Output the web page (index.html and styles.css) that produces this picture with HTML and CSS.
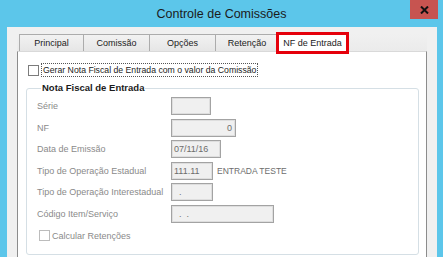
FILE: index.html
```html
<!DOCTYPE html>
<html lang="pt">
<head>
    <meta charset="UTF-8">
    <title>Controle de Comissões</title>
    <link rel="stylesheet" href="styles.css">
</head>
<body>
    <div class="window">
        <div class="titlebar">
            <span></span>
            <div class="title">Controle de Comissões</div>
            <div class="close">
                <svg width="9" height="8" viewBox="0 0 9 8">
                    <path d="M1 0.5 L8 7.5 M8 0.5 L1 7.5" stroke="#111" stroke-width="2" fill="none"/>
                </svg>
            </div>
        </div>
        <div class="client">
            <div class="tabs">
                <div class="tab w-principal">Principal</div>
                <div class="tab w-comissao">Comissão</div>
                <div class="tab w-opcoes">Opções</div>
                <div class="tab w-retencao">Retenção</div>
                <div class="tab active">NF de Entrada</div>
            </div>
            <div class="page">
                <div class="check top-check">
                    <span class="box"></span>
                    <span class="focus">Gerar Nota Fiscal de Entrada com o valor da Comissão</span>
                </div>
                <fieldset class="group">
                    <legend>Nota Fiscal de Entrada</legend>
                    <div class="fields">
                        <span class="lbl">Série</span>
                        <div class="field"><span class="inp w-serie"></span></div>

                        <span class="lbl">NF</span>
                        <div class="field"><span class="inp w-nf right">0</span></div>

                        <span class="lbl">Data de Emissão</span>
                        <div class="field"><span class="inp w-data">07/11/16</span></div>

                        <span class="lbl">Tipo de Operação Estadual</span>
                        <div class="field">
                            <span class="inp w-tipo">111.11</span>
                            <span class="desc">ENTRADA TESTE</span>
                        </div>

                        <span class="lbl">Tipo de Operação Interestadual</span>
                        <div class="field"><span class="inp w-tipo dot">.</span></div>

                        <span class="lbl">Código Item/Serviço</span>
                        <div class="field"><span class="inp w-codigo dot">. &nbsp;.</span></div>
                    </div>
                    <div class="check disabled">
                        <span class="box"></span>
                        <span>Calcular Retenções</span>
                    </div>
                </fieldset>
            </div>
        </div>
    </div>
</body>
</html>
```

FILE: styles.css
```css
body {
    margin: 0;
    width: 443px;
    height: 257px;
    overflow: hidden;
    font-family: "Liberation Sans", Arial, sans-serif;
    font-size: 9px;
}
.window {
    height: 257px;
    display: flex;
    flex-direction: column;
    background-color: #5cc6ea;
}
.titlebar {
    height: 27px;
    display: grid;
    grid-template-columns: 1fr auto 1fr;
}
.title {
    font-size: 12.5px;
    color: #1b1b1b;
    line-height: 29px;
}
.close {
    justify-self: end;
    width: 28px;
    height: 19px;
    margin-right: 5px;
    background-color: #c75450;
    display: flex;
    align-items: center;
    justify-content: center;
}
.client {
    flex: 1;
    margin: 0 6px 0 7px;
    padding: 7px 10px 0 10px;
    background-color: #f0f0f0;
    display: flex;
    flex-direction: column;
}
.tabs {
    height: 17px;
    display: flex;
    align-items: flex-end;
    padding-left: 2px;
    background: linear-gradient(#f0f0f0, #ebebeb);
}
.tab {
    height: 17px;
    box-sizing: border-box;
    border: 1px solid #acacac;
    border-bottom: none;
    margin-right: -1px;
    background: linear-gradient(#f2f2f2, #e6e6e6);
    color: #1b1b1b;
    text-align: center;
    line-height: 16px;
}
.w-principal { width: 65px; }
.w-comissao { width: 67px; }
.w-opcoes { width: 67px; }
.w-retencao { width: 64px; }
.tab.active {
    width: 67px;
    height: 16px;
    margin-left: 1px;
    border: none;
    background: #ffffff;
    outline: 3px solid #e5000b;
    position: relative;
    z-index: 1;
}
.page {
    flex: 1;
    background-color: #ffffff;
    border-left: 1px solid #8c8c8c;
    border-right: 1px solid #8c8c8c;
    border-top: 1px solid #d9d9d9;
    padding: 11px 7px 0 8px;
}
.check {
    display: flex;
    align-items: center;
    height: 14px;
    color: #1b1b1b;
}
.top-check {
    margin-left: 2px;
}
.box {
    width: 9px;
    height: 9px;
    border: 1px solid #7c7c7c;
    background: #ffffff;
    margin-right: 2px;
}
.focus {
    border: 1px dotted #555;
    padding: 0 1px;
    line-height: 12px;
    font-size: 8.7px;
}
.group {
    margin: 5px 0 0 0;
    padding: 3px 10px 11px 10px;
    border: 1px solid #d5dfe5;
    border-radius: 3px;
}
.group legend {
    font-weight: bold;
    color: #1b1b1b;
    padding: 0 1px;
    margin-left: 4px;
    line-height: 12px;
    font-size: 9.5px;
}
.fields {
    display: grid;
    grid-template-columns: 134px 1fr;
    grid-auto-rows: 18px;
    row-gap: 3.6px;
    align-items: center;
}
.field {
    display: flex;
    align-items: center;
}
.lbl {
    color: #8a8a8a;
}
.inp {
    height: 18px;
    box-sizing: border-box;
    background-color: #f0f0f0;
    border: 1px solid #a3a3a3;
    box-shadow: inset 0 0 0 1px #dedede;
    color: #6d6d6d;
    padding: 0 2px;
    line-height: 16px;
}
.right { text-align: right; padding-right: 3px; }
.dot { padding-left: 7px; }
.w-serie { width: 40px; }
.w-nf { width: 65px; }
.w-data { width: 50px; }
.w-tipo { width: 42px; }
.w-codigo { width: 103px; }
.desc {
    color: #6d6d6d;
    padding-left: 4px;
    font-size: 8.5px;
}
.disabled {
    margin: 6px 0 0 2px;
    color: #8a8a8a;
}
.disabled .box {
    border-color: #bcbcbc;
}
```
